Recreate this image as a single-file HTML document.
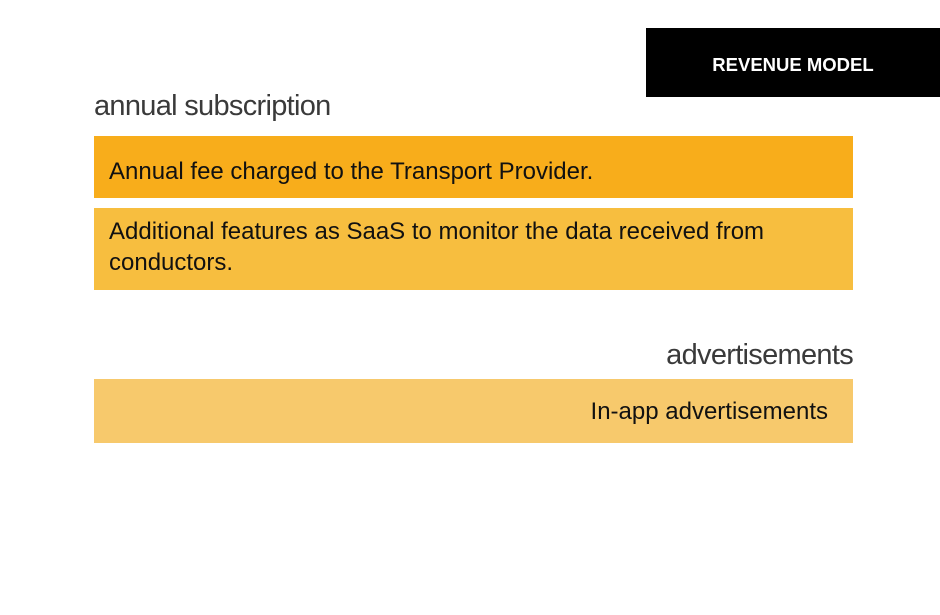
<!DOCTYPE html>
<html><head><style>
body{margin:0;width:940px;height:615px;background:#fff;position:relative;overflow:hidden;font-family:"Liberation Sans",sans-serif;}
.k{position:absolute;left:646px;top:28px;width:294px;height:69px;background:#000;color:#fff;font-weight:bold;font-size:18.5px;line-height:73px;text-align:center;box-sizing:border-box;}
.h{position:absolute;color:#3a3a3a;font-size:29px;letter-spacing:-0.7px;font-weight:normal;}
.b{position:absolute;left:94px;width:759px;color:#111;font-size:24px;box-sizing:border-box;padding-left:15px;white-space:nowrap;}
</style></head><body>
<div class="k">REVENUE MODEL</div>
<div class="h" style="left:94px;top:90px;">annual subscription</div>
<div class="b" style="top:136px;height:62px;background:#f8ad1b;line-height:72px;">Annual fee charged to the Transport Provider.</div>
<div class="b" style="top:208px;height:82px;background:#f7be3f;padding-top:8px;line-height:31px;">Additional features as SaaS to monitor the data received from<br>conductors.</div>
<div class="h" style="right:87px;top:339px;">advertisements</div>
<div class="b" style="top:379px;height:64px;background:#f7c96c;line-height:66px;text-align:right;padding-right:25px;">In-app advertisements</div>
</body></html>
